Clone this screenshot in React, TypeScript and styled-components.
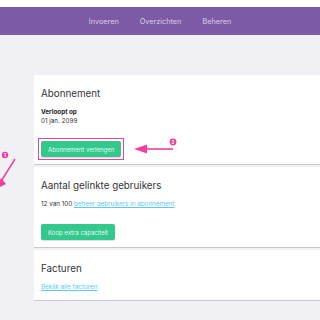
import React from "react";
import styled, { createGlobalStyle } from "styled-components";

const colors = {
  purple: "#7c5aa6",
  page: "#f0f0f5",
  green: "#33c98c",
  link: "#5ac8fa",
  text: "#333",
  pink: "#f0409a",
};

const Global = createGlobalStyle`
  html, body {
    margin: 0;
    padding: 0;
    background: #fff;
    overflow: hidden;
  }
  body {
    font-family: Inter, "Liberation Sans", sans-serif;
    color: ${colors.text};
  }
`;

export default function App() {
  return (
    <Page>
      <Global />
      <TopGap />
      <NavBar>
        <NavItem>Invoeren</NavItem>
        <NavItem>Overzichten</NavItem>
        <NavItem>Beheren</NavItem>
      </NavBar>
      <Main>
        <Card>
          <Title>Abonnement</Title>
          <Label>Verloopt op</Label>
          <Small>01 jan. 2099</Small>
          <Highlight>
            <Button>Abonnement verlengen</Button>
          </Highlight>
        </Card>
        <Card>
          <Title>Aantal gelinkte gebruikers</Title>
          <Small>
            12 van 100 <Link>beheer gebruikers in abonnement</Link>
          </Small>
          <ButtonRow>
            <Button>Koop extra capaciteit</Button>
          </ButtonRow>
        </Card>
        <Card $compact>
          <Title>Facturen</Title>
          <Small>
            <Link>Bekijk alle facturen</Link>
          </Small>
        </Card>
      </Main>
      <Annotations width="320" height="320" viewBox="0 0 320 320">
        {/* 1 */}
        <circle cx="5" cy="155" r="3.2" fill={colors.pink} />
        <text x="5" y="157" fontSize="4.5" fill="#fff" textAnchor="middle" fontFamily="Inter, sans-serif" fontWeight="700">1</text>
        <line x1="15" y1="159" x2="0" y2="183" stroke={colors.pink} strokeWidth="1.5" />
        <polygon points="-4,189 1,178 6,184" fill={colors.pink} />
        {/* 2 */}
        <circle cx="173" cy="142" r="3.4" fill={colors.pink} />
        <text x="173" y="144" fontSize="4.5" fill="#fff" textAnchor="middle" fontFamily="Inter, sans-serif" fontWeight="700">2</text>
        <line x1="144" y1="149" x2="173" y2="149" stroke={colors.pink} strokeWidth="1.6" />
        <polygon points="134,149 147,144.5 147,153.5" fill={colors.pink} />
      </Annotations>
    </Page>
  );
}

const Page = styled.div`
  position: relative;
  width: 320px;
  height: 320px;
  background: ${colors.page};
  overflow: hidden;
`;

const TopGap = styled.div`
  height: 7px;
  background: #fff;
`;

const NavBar = styled.nav`
  height: 28px;
  background: ${colors.purple};
  display: flex;
  justify-content: center;
  align-items: center;
  gap: 21px;
`;

const NavItem = styled.span`
  font-size: 7.3px;
  color: rgba(255, 255, 255, 0.72);
`;

const Main = styled.main`
  padding: 40px 0 0 34px;
  display: flex;
  flex-direction: column;
  gap: 3px;
`;

const Card = styled.section<{ $compact?: boolean }>`
  width: 320px;
  background: #fff;
  padding: 12px 7px ${(p) => (p.$compact ? "8px" : "7px")};
  box-shadow: 0 1px 0 #c8c8ce;
  display: flex;
  flex-direction: column;
  align-items: flex-start;
`;

const Title = styled.h2`
  margin: 0 0 8px;
  font-size: 9.8px;
  line-height: 13px;
  font-weight: 400;
  color: #333;
`;

const Label = styled.div`
  font-size: 6.3px;
  line-height: 9px;
  font-weight: 700;
  color: #222;
`;

const Small = styled.div`
  font-size: 6.3px;
  line-height: 9px;
  color: #333;
`;

const Link = styled.a`
  color: ${colors.link};
  text-decoration: underline;
`;

const ButtonRow = styled.div`
  margin-top: 15px;
  display: flex;
`;

const Highlight = styled.div`
  margin: 12px 0 -3px -3px;
  padding: 2px;
  border: 1px solid ${colors.pink};
  display: flex;
`;

const Button = styled.button`
  height: 16px;
  padding: 0 7px;
  border: none;
  border-radius: 2px;
  background: ${colors.green};
  color: rgba(255, 255, 255, 0.9);
  font-family: Inter, "Liberation Sans", sans-serif;
  font-size: 6px;
  box-shadow: 0 1px 1px rgba(0, 0, 0, 0.15);
`;

const Annotations = styled.svg`
  position: absolute;
  left: 0;
  top: 0;
  pointer-events: none;
  overflow: visible;
`;
